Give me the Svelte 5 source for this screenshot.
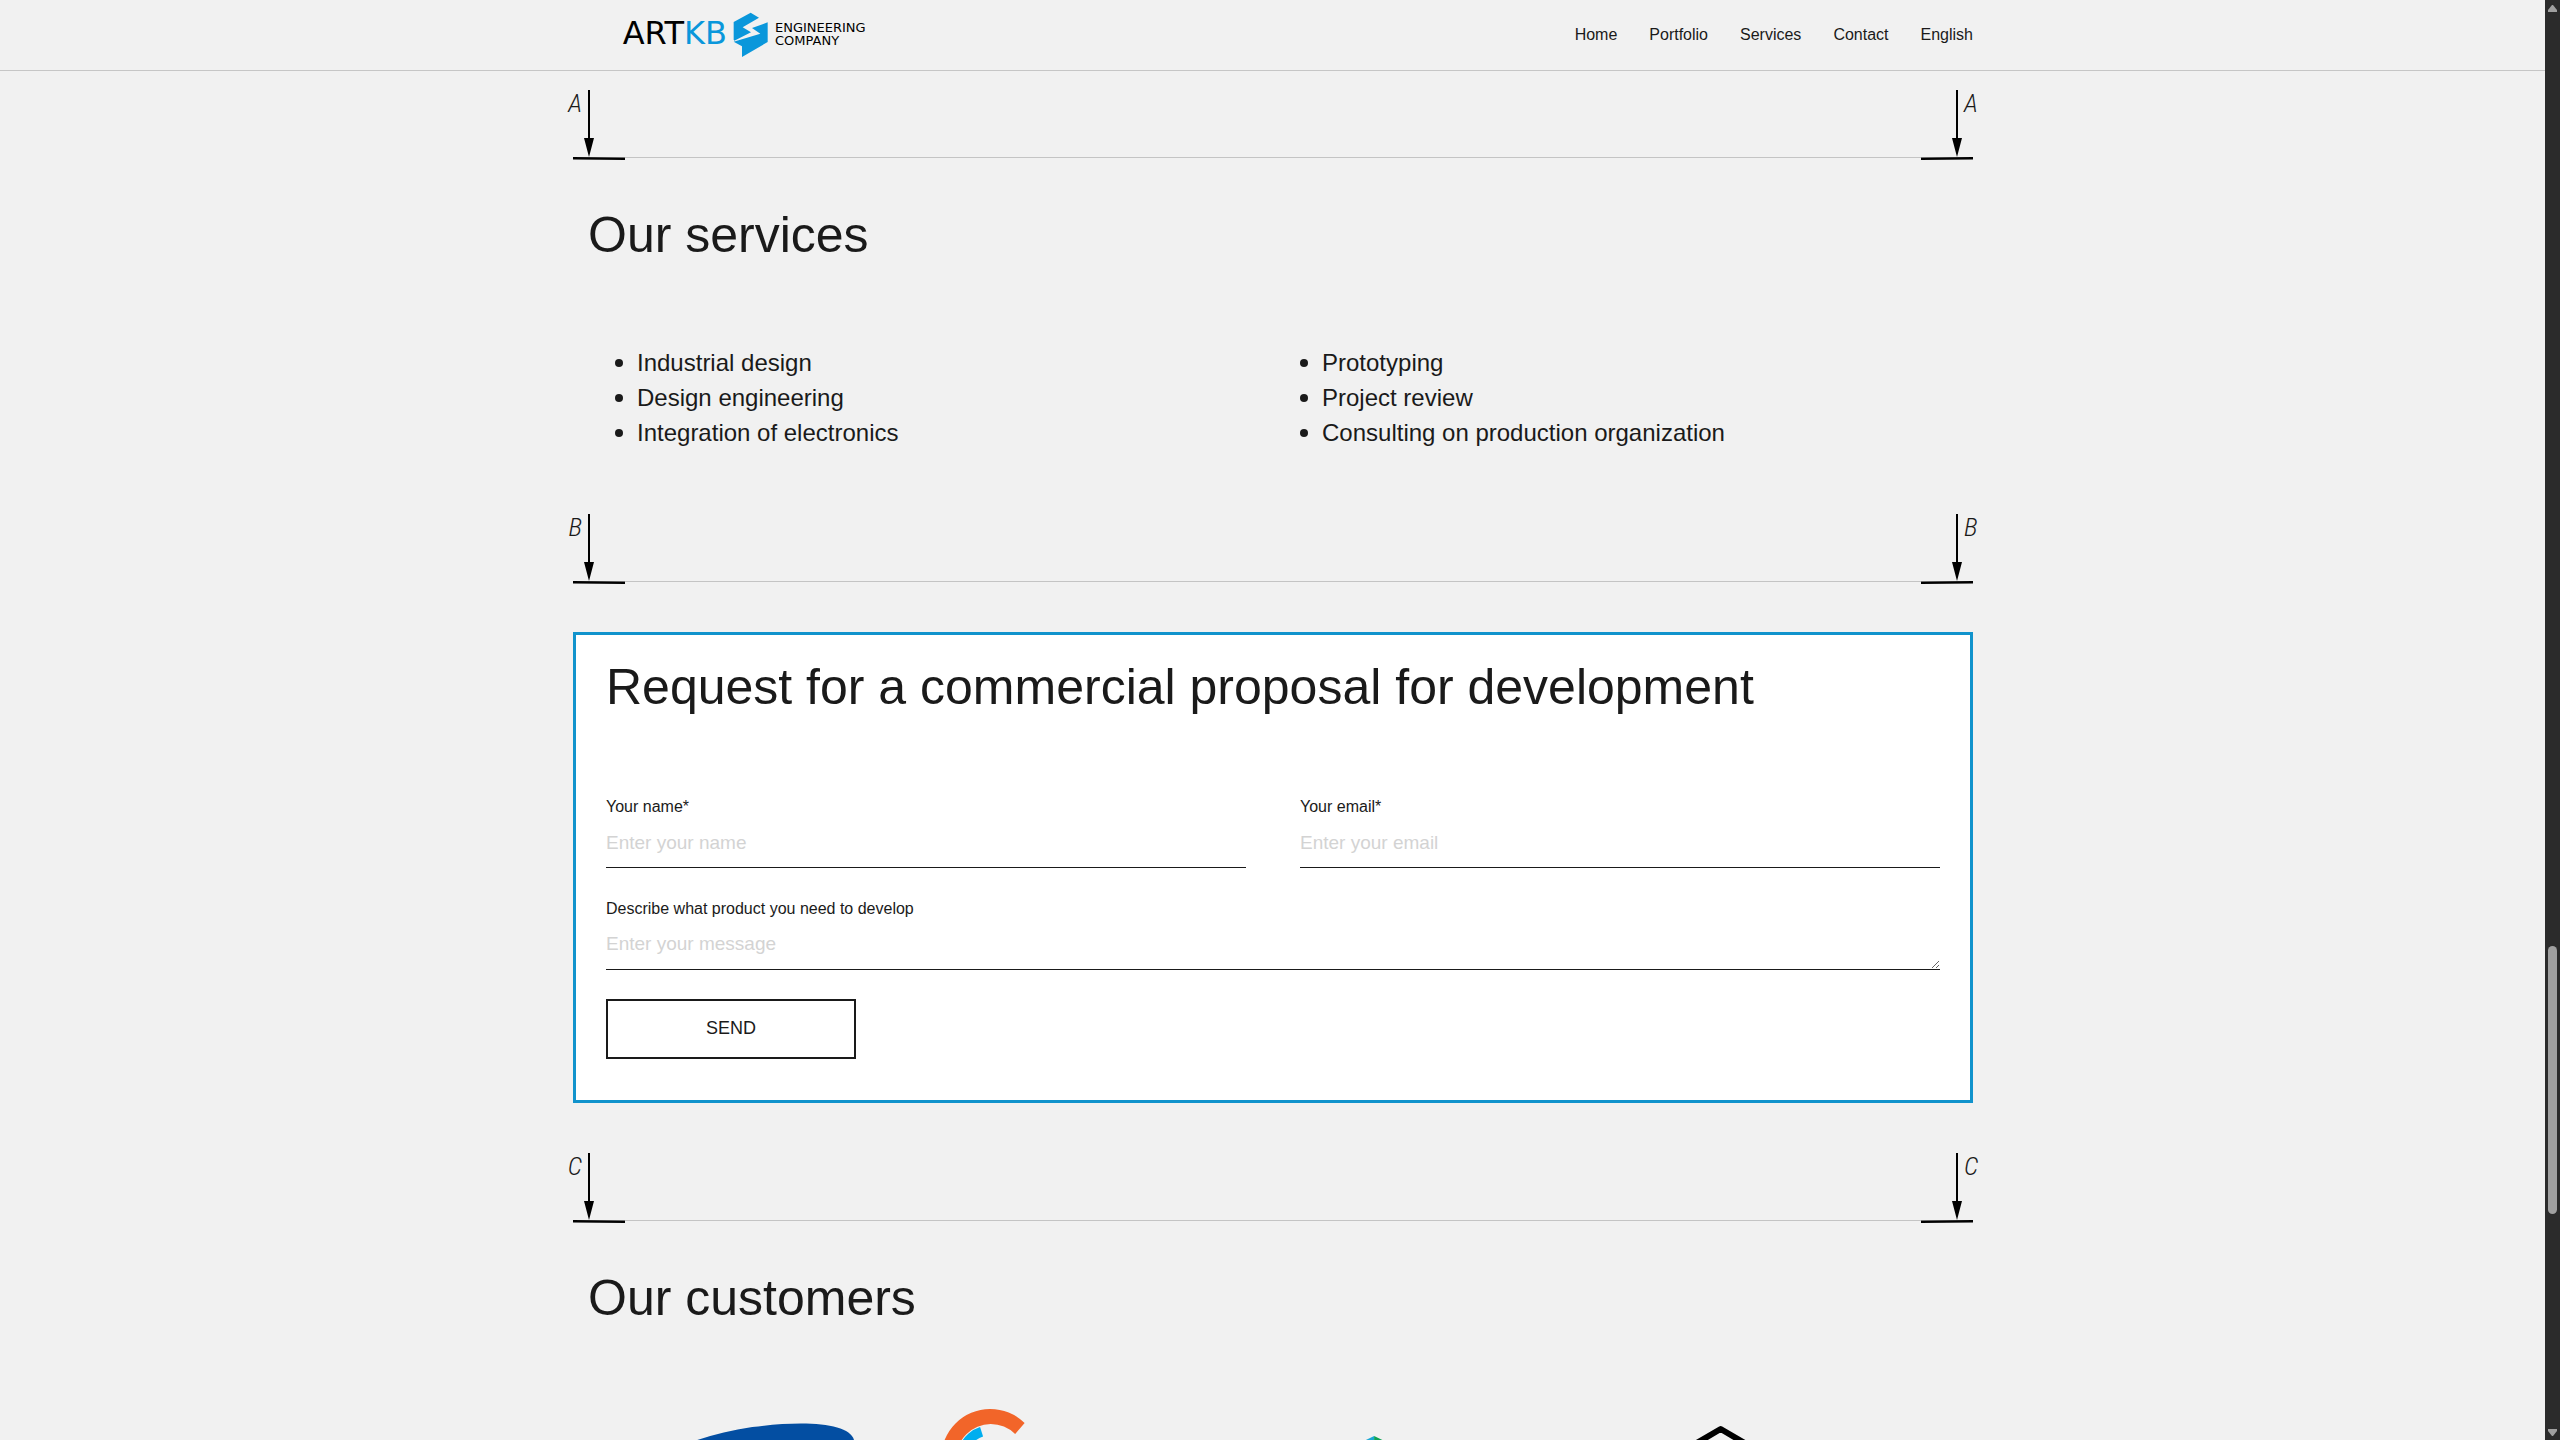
<script>
  const nav = ['Home', 'Portfolio', 'Services', 'Contact', 'English'];
  const services = [
    ['Industrial design', 'Design engineering', 'Integration of electronics'],
    ['Prototyping', 'Project review', 'Consulting on production organization'],
  ];
</script>

{#snippet section(letter)}
  <div class="cut" aria-hidden="true">
    <span class="mark">
      <svg width="52" height="70" viewBox="0 0 52 70">
        <path d="M15 0h2v50h-2z M11 48h10l-5 19z M0 67l52 .6v2.4l-52-.4z" />
      </svg>
      <span class="letter">{letter}</span>
    </span>
    <span class="rule"></span>
    <span class="mark right">
      <svg width="52" height="70" viewBox="0 0 52 70">
        <path d="M35 0h2v50h-2z M31 48h10l-5 19z M0 67.6l52-.6v2.6l-52 .4z" />
      </svg>
      <span class="letter">{letter}</span>
    </span>
  </div>
{/snippet}

<div class="shell">
  <div class="page">
    <header>
      <div class="bar">
        <a class="logo" href="#home" aria-label="ARTKB Engineering Company">
          <span class="word">ART<b>KB</b></span>
          <svg width="36" height="46" viewBox="552 36 108 138">
            <path
              fill="#0a97db"
              d="M605 38L630 53 581 82 606 97 556 122 554 119V66z M656 67V126L579 171V139L554 125 634 101 609 84z"
            />
          </svg>
          <span class="tag">ENGINEERING<br />COMPANY</span>
        </a>
        <nav>
          {#each nav as item}
            <a href="#{item.toLowerCase()}">{item}</a>
          {/each}
        </nav>
      </div>
    </header>

    <main>
      {@render section('A')}
      <section class="services">
        <h2>Our services</h2>
        <div class="lists">
          {#each services as list}
            <ul>
              {#each list as item}
                <li>{item}</li>
              {/each}
            </ul>
          {/each}
        </div>
      </section>

      {@render section('B')}
      <form onsubmit={(e) => e.preventDefault()}>
        <h2>Request for a commercial proposal for development</h2>
        <div class="fields">
          <div class="field">
            <label for="name">Your name*</label>
            <input id="name" type="text" placeholder="Enter your name" />
          </div>
          <div class="field">
            <label for="email">Your email*</label>
            <input id="email" type="email" placeholder="Enter your email" />
          </div>
          <div class="field wide">
            <label for="message">Describe what product you need to develop</label>
            <textarea id="message" rows="1" placeholder="Enter your message"></textarea>
          </div>
        </div>
        <button type="submit">SEND</button>
      </form>

      {@render section('C')}
      <section class="customers">
        <h2>Our customers</h2>
        <div class="brands">
          <svg viewBox="0 0 342 120">
            <path fill="#034ea2" d="M66 50C92 36 126 25 164 19C219 12 264 15 266 34C268 56 190 88 120 92C70 94 40 70 66 50z" />
          </svg>
          <svg viewBox="0 0 342 120">
            <path fill="#f26529" d="M93.500 15A49 49 0 1 0 93.500 85L84 75A34.500 34.500 0 1 1 84 26z" />
            <path fill="#00aeef" d="M49 19A32.500 32.500 0 0 0 29 63L37 58A23 23 0 0 1 52 28.500z" />
          </svg>
          <svg viewBox="0 0 342 120">
            <path fill="#1ba8d5" d="M101 28V60L76 46V40z" />
            <path fill="#0fa354" d="M101 28L126 40V46L101 60z" />
          </svg>
          <svg viewBox="0 0 342 120">
            <path fill="none" stroke="#000" stroke-width="6" stroke-linejoin="round" d="M104.500 21L149 47V97L104.500 123 60 97V47z" />
          </svg>
        </div>
      </section>
    </main>
  </div>

  <div class="scrollbar" aria-hidden="true">
    <svg width="9" height="8" viewBox="0 0 9 8"><path d="M4 0h1l4 5v2H0V5z" /></svg>
    <div class="track"><i class="before"></i><i class="thumb"></i><i class="after"></i></div>
    <svg width="9" height="8" viewBox="0 0 9 8"><path d="M0 0h9v2L5 7H4L0 2z" /></svg>
  </div>
</div>

<style>
  :global(body) {
    margin: 0;
    background: #f1f1f1;
  }
  .shell {
    display: grid;
    grid-template-columns: minmax(0, 1fr) 15px;
    height: 100vh;
    font-family: 'Liberation Sans', Arial, sans-serif;
    font-size: 16px;
    line-height: 20px;
    color: #1a1a1a;
  }
  .page {
    overflow: hidden;
    background: #f1f1f1;
  }
  header {
    border-bottom: 1px solid #c6c6c6;
  }
  .bar,
  main {
    max-width: 1400px;
    margin: 0 auto;
    padding-left: 1px;
  }
  .bar {
    display: flex;
    align-items: center;
    justify-content: space-between;
    height: 70px;
  }
  a {
    color: inherit;
    text-decoration: none;
  }
  .logo {
    display: flex;
    align-items: center;
    gap: 6px;
    margin-left: 43px;
    color: #000;
  }
  .word {
    font: 400 32px/36px 'DejaVu Sans', sans-serif;
    width: 111px;
    text-align: right;
    padding-bottom: 4px;
  }
  .word b {
    font-weight: 400;
    color: #0a97db;
  }
  .tag {
    font: 13px/13px 'DejaVu Sans', sans-serif;
    padding-bottom: 3px;
  }
  nav {
    display: flex;
    gap: 32px;
  }
  main {
    display: flex;
    flex-direction: column;
    padding-top: 19px;
  }
  .cut {
    display: flex;
    align-items: flex-end;
    height: 70px;
  }
  .mark {
    position: relative;
    height: 70px;
  }
  .mark svg {
    display: block;
  }
  .letter {
    position: absolute;
    top: 0;
    right: 43px;
    font: italic 300 26px/26px 'Liberation Sans Narrow', 'Roboto Condensed', Roboto, sans-serif;
  }
  .right .letter {
    right: auto;
    left: 43px;
  }
  .rule {
    flex: 1;
    height: 1px;
    margin-bottom: 2px;
    background: #c4c4c4;
  }
  h2 {
    margin: 0;
    font-size: 50px;
    line-height: 60px;
    font-weight: 400;
  }
  .services {
    padding: 45px 15px 64px;
  }
  .lists {
    display: grid;
    grid-template-columns: 1fr 1fr;
    margin-top: 80px;
  }
  ul {
    margin: 0;
    padding-left: 27px;
    list-style: none;
    font-size: 24px;
    line-height: 35px;
  }
  li {
    display: flex;
    align-items: center;
    gap: 14px;
  }
  li::before {
    content: '';
    width: 8px;
    height: 8px;
    border-radius: 50%;
    background: #1a1a1a;
  }
  form {
    margin: 48px 0 50px;
    padding: 22px 30px 41px;
    background: #fff;
    border: 3px solid #1193cc;
  }
  .fields {
    display: grid;
    grid-template-columns: 1fr 1fr;
    gap: 31px 54px;
    margin: 80px 0 29px;
  }
  .field {
    display: flex;
    flex-direction: column;
  }
  .wide {
    grid-column: 1 / -1;
  }
  input,
  textarea {
    box-sizing: border-box;
    width: 100%;
    height: 51px;
    margin: 0;
    padding: 2px 0 0;
    border: 0;
    border-bottom: 1px solid #1a1a1a;
    border-radius: 0;
    outline: 0;
    background: transparent;
    color: #1a1a1a;
    font: 19px/22px 'Liberation Sans', Arial, sans-serif;
  }
  textarea {
    padding-top: 14px;
    resize: vertical;
  }
  ::placeholder {
    color: #d3d3d3;
    opacity: 1;
  }
  button {
    display: block;
    width: 250px;
    height: 60px;
    padding: 0 0 2px;
    background: #fff;
    border: 2px solid #1a1a1a;
    color: #1a1a1a;
    font: 18px/20px 'Liberation Sans', Arial, sans-serif;
  }
  .customers {
    padding: 45px 15px 0;
  }
  .brands {
    display: grid;
    grid-template-columns: repeat(4, 1fr);
    margin-top: 80px;
  }
  .brands svg {
    display: block;
    width: 100%;
  }
  .scrollbar {
    display: flex;
    flex-direction: column;
    align-items: center;
    justify-content: space-between;
    padding: 5px 0 3px;
    background: #2b2b2b;
  }
  .scrollbar svg {
    fill: #a0a0a0;
  }
  .track {
    flex: 1;
    display: flex;
    flex-direction: column;
    width: 9px;
  }
  .before {
    flex: 933;
  }
  .thumb {
    flex: 268;
    border-radius: 5px;
    background: #a0a0a0;
  }
  .after {
    flex: 215;
  }
</style>
